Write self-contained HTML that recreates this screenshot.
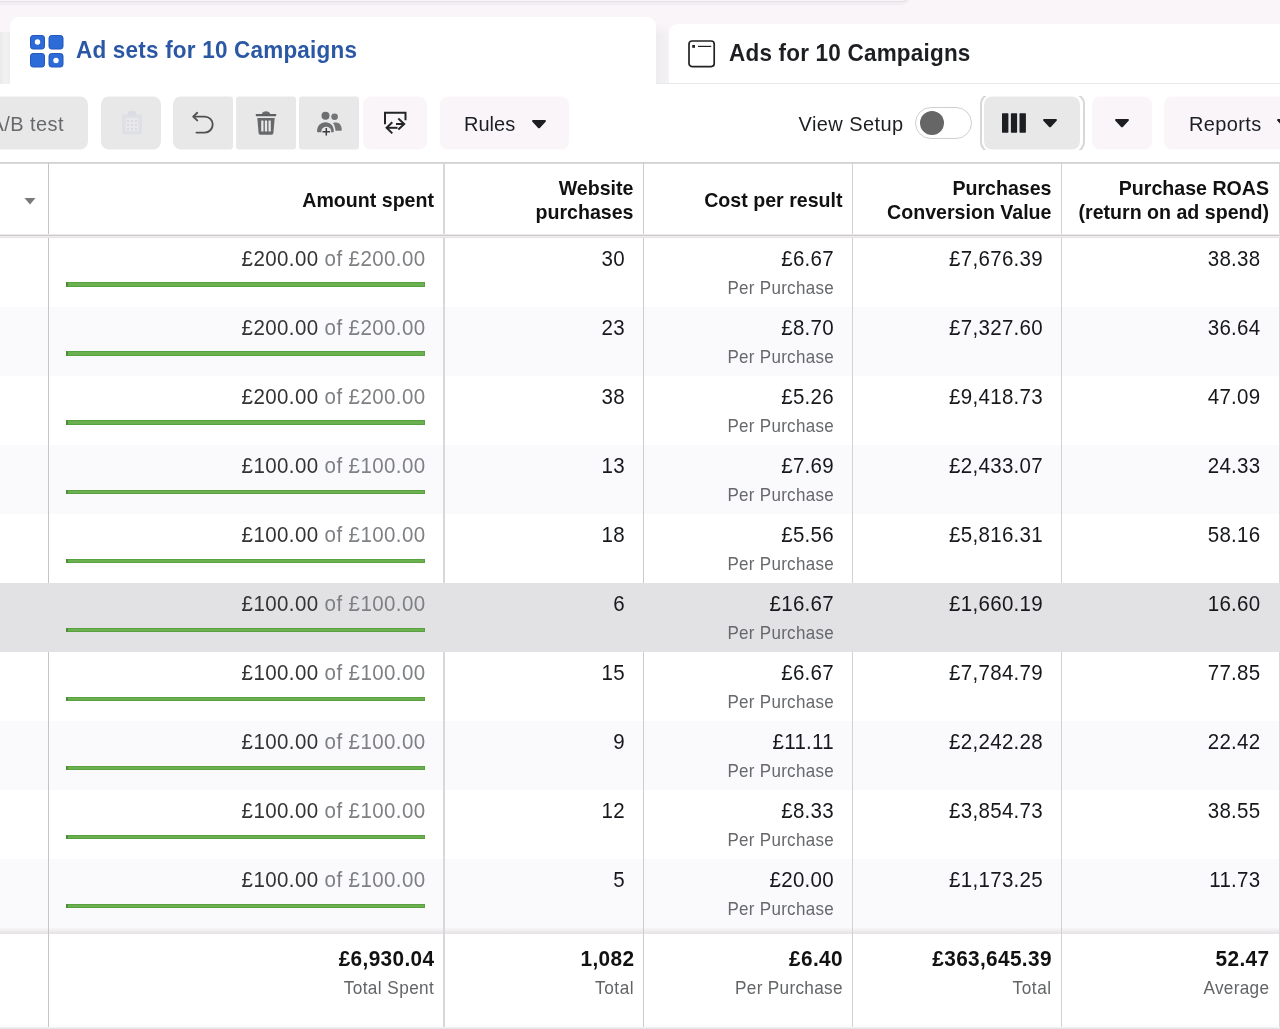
<!DOCTYPE html>
<html lang="en">
<head>
<meta charset="utf-8">
<title>Ad sets for 10 Campaigns</title>
<style>
*{box-sizing:border-box;margin:0;padding:0}
html,body{width:1280px;height:1029px;overflow:hidden;background:#fff}
body{font-family:"Liberation Sans",sans-serif;color:#1c1e21;position:relative}
.abs{position:absolute}
/* top strip */
#topbg{left:0;top:0;width:1280px;height:84px;background:#f9f5f9}
#topline{left:-10px;top:-8.5px;width:921px;height:10px;background:#f9f5f9;border-bottom:1.5px solid #e3e1e5;border-right:1.5px solid #e3e1e5;border-radius:0 0 12px 0;box-shadow:0 3px 0 #f1eef2}
#tabline{left:0;top:82px;width:1280px;height:2px;background:#e9e8ea}
#sliverL{left:0;top:32px;width:9.5px;height:51.5px;background:linear-gradient(90deg,#eaeaea,#f2f2f2 55%,#ededed)}
#tab1{left:10px;top:17px;width:646px;height:67px;background:#fff;border-radius:9px 9px 0 0}
#gap{left:656px;top:22px;width:13px;height:61px;background:linear-gradient(180deg,#f9f5f9 0,rgba(249,245,249,0) 14px),linear-gradient(90deg,#eeecee,#f5f2f5)}
#tab2{left:668.5px;top:23.5px;width:630px;height:59px;background:#fff;border-radius:9px 0 0 0}
.tabt{font-weight:700;font-size:22.5px;white-space:nowrap;line-height:26px;transform:scaleY(1.06);transform-origin:0 20.8px}
#t1{left:76px;top:38.3px;color:#2b58a5;letter-spacing:0.2px}
#t2{left:729px;top:41px;color:#1c1e21;letter-spacing:0.2px}
/* toolbar */
.btn{position:absolute;top:96px;height:53px;transform:translateY(0.5px);background:#e9e8e9;border-radius:8px}
.btn.lt{background:#f9f5f9}
.tt{position:absolute;font-size:20px;line-height:24px;white-space:nowrap;color:#1c1e21;transform:scaleY(1.04);transform-origin:0 18.9px}
/* table */
.hline{position:absolute;left:0;width:1280px}
.vline{position:absolute;top:163px;width:1px;height:866px;background:#d3d2d4}
.hd{position:absolute;font-weight:700;font-size:19.6px;line-height:24px;text-align:right;white-space:nowrap;color:#111;transform:scaleY(1.06);transform-origin:100% 18.8px}
.row{position:absolute;left:0;width:1280px;height:69.05px}
.row.alt{background:#fafafd}
.row.hl{background:#e2e2e4;z-index:3}
.c{position:absolute;top:0;height:100%;text-align:right}
.c1{left:49px;width:376px}
.c2{left:444px;width:180.5px}
.c3{left:644px;width:189.5px}
.c4{left:853px;width:189.5px}
.c5{left:1062px;width:198px}
.v{position:absolute;right:-0.5px;top:9.2px;font-size:20.5px;line-height:24px;white-space:nowrap;color:#17181b;letter-spacing:0.3px;transform:scaleY(1.08);transform-origin:100% 19.1px}
.c1 .v{letter-spacing:0.4px}
.g{color:#7e8083}
.a{color:#333}
.s{position:absolute;right:-0.5px;top:41px;font-size:17px;line-height:20px;color:#66686b;white-space:nowrap;letter-spacing:0.3px;transform:scaleY(1.07);transform-origin:100% 15.9px}
.bar{position:absolute;left:17px;right:0;top:44.8px;height:4.5px;background:#6bb150;border:1px solid #58a040;border-left:2px solid #4a8a3a}
.ft{position:absolute;text-align:right;white-space:nowrap}
.fv{font-weight:700;font-size:20.8px;line-height:24px;color:#111;letter-spacing:0.35px;margin-right:-0.35px;transform:scaleY(1.06);transform-origin:100% 19.2px}
.fs{font-size:17.2px;line-height:20px;color:#626466;letter-spacing:0.3px;margin-right:-0.3px;transform:scaleY(1.06);transform-origin:100% 16px}
</style>
</head>
<body>
<div id="root" style="position:absolute;left:0;top:0;width:1280px;height:1029px;will-change:transform;overflow:hidden">
<div id="topbg" class="abs"></div>
<div id="topline" class="abs"></div>
<div id="tabline" class="abs"></div>
<div id="sliverL" class="abs"></div>
<div id="tab1" class="abs"></div>
<div id="gap" class="abs"></div>
<div id="tab2" class="abs"></div>
<svg class="abs" style="left:30px;top:35px" width="34" height="33" viewBox="0 0 34 33">
  <g fill="#2d6bd8" stroke="#2558b8" stroke-width="1">
    <rect x="0.5" y="0.5" width="14" height="13.5" rx="2.5"/>
    <rect x="19" y="0.5" width="14" height="13.5" rx="2.5"/>
    <rect x="0.5" y="18.5" width="14" height="13.5" rx="2.5"/>
    <rect x="19" y="18.5" width="14" height="13.5" rx="2.5"/>
  </g>
  <circle cx="7.5" cy="7" r="2.7" fill="#fff"/>
  <circle cx="26" cy="25.5" r="2.7" fill="#fff"/>
</svg>
<div id="t1" class="abs tabt m">Ad sets for 10 Campaigns</div>
<svg class="abs" style="left:687px;top:39px" width="30" height="30" viewBox="0 0 30 30">
  <rect x="2" y="2" width="25.2" height="25.6" rx="3" fill="none" stroke="#222" stroke-width="1.7"/>
  <rect x="5.2" y="6" width="2.8" height="2.8" fill="#222"/>
  <rect x="11" y="6.8" width="13.2" height="1.2" fill="#222"/>
</svg>
<div id="t2" class="abs tabt m">Ads for 10 Campaigns</div>

<!-- toolbar -->
<div class="btn" style="left:-20px;width:108px"></div>
<div class="tt m" style="left:-9.5px;top:112px;color:#66686b;letter-spacing:0.42px">A/B test</div>
<div class="btn" style="left:101px;width:60px"></div>
<div class="btn" style="left:173px;width:60px;border-radius:8px 3px 3px 8px"></div>
<div class="btn" style="left:236px;width:60px;border-radius:3px"></div>
<div class="btn" style="left:299px;width:60px;border-radius:3px"></div>
<div class="btn lt" style="left:363px;width:64px"></div>
<div class="btn lt" style="left:440px;width:129px"></div>
<div class="tt m" style="left:464px;top:112px">Rules</div>
<svg class="abs" style="left:532.3px;top:119.5px" width="14" height="9" viewBox="0 0 14 9"><path d="M1.2 0 H12.8 C13.8 0 14.3 1.1 13.6 1.8 L8.1 7.8 C7.5 8.5 6.5 8.5 5.9 7.8 L0.4 1.8 C-0.3 1.1 0.2 0 1.2 0 Z" fill="#1c1e21"/></svg>
<div class="tt m" style="left:798.5px;top:112px;letter-spacing:0.42px">View Setup</div>
<div class="abs" style="left:915px;top:107px;width:57px;height:32px;border-radius:16px;border:1.5px solid #cfcfd1;background:#fff"></div>
<div class="abs" style="left:919.5px;top:111px;width:24px;height:24px;border-radius:12px;background:#666"></div>
<div class="abs" style="left:978px;top:96px;width:110px;height:54px;overflow:hidden"><div class="abs" style="left:2.2px;top:-3px;width:104.6px;height:60px;border-radius:11px;border:2.5px solid #d9d8d9;background:#fff"></div></div>
<div class="btn" style="left:983.7px;width:96.5px"></div>
<svg class="abs" style="left:1002px;top:113px" width="24" height="20" viewBox="0 0 24 20"><g fill="#1c1e21"><rect x="0" y="0.2" width="6.4" height="19.5" rx="0.6"/><rect x="8.9" y="0.2" width="6.2" height="19.5" rx="0.6"/><rect x="17.5" y="0.2" width="6.4" height="19.5" rx="0.6"/></g></svg>
<svg class="abs" style="left:1043.3px;top:119.4px" width="14" height="9" viewBox="0 0 14 9"><path d="M1.2 0 H12.8 C13.8 0 14.3 1.1 13.6 1.8 L8.1 7.8 C7.5 8.5 6.5 8.5 5.9 7.8 L0.4 1.8 C-0.3 1.1 0.2 0 1.2 0 Z" fill="#1c1e21"/></svg>
<div class="btn lt" style="left:1092px;width:60px"></div>
<svg class="abs" style="left:1115.2px;top:119.4px" width="14" height="9" viewBox="0 0 14 9"><path d="M1.2 0 H12.8 C13.8 0 14.3 1.1 13.6 1.8 L8.1 7.8 C7.5 8.5 6.5 8.5 5.9 7.8 L0.4 1.8 C-0.3 1.1 0.2 0 1.2 0 Z" fill="#1c1e21"/></svg>
<div class="btn lt" style="left:1164px;width:140px"></div>
<div class="tt m" style="left:1189px;top:112px;letter-spacing:0.36px">Reports</div>
<svg class="abs" style="left:1277px;top:119.4px" width="14" height="9" viewBox="0 0 14 9"><path d="M1.2 0 H12.8 C13.8 0 14.3 1.1 13.6 1.8 L8.1 7.8 C7.5 8.5 6.5 8.5 5.9 7.8 L0.4 1.8 C-0.3 1.1 0.2 0 1.2 0 Z" fill="#1c1e21"/></svg>


<!-- clipboard (disabled) -->
<svg class="abs" style="left:120px;top:110px" width="24" height="26" viewBox="0 0 24 26">
  <rect x="2" y="4" width="20" height="20.5" rx="2" fill="#dfdfe6"/>
  <rect x="8" y="1" width="8" height="5" rx="1.5" fill="#dcdce4"/>
  <rect x="5.5" y="8" width="13" height="13" fill="#e9e8ec"/>
  <g fill="#dadae2"><rect x="7" y="10" width="2" height="2"/><rect x="11" y="10" width="2" height="2"/><rect x="15" y="10" width="2" height="2"/><rect x="7" y="14" width="2" height="2"/><rect x="11" y="14" width="2" height="2"/><rect x="15" y="14" width="2" height="2"/><rect x="7" y="18" width="2" height="2"/><rect x="11" y="18" width="2" height="2"/><rect x="15" y="18" width="2" height="2"/></g>
</svg>
<!-- undo -->
<svg class="abs" style="left:188px;top:108px" width="30" height="30" viewBox="188 108 30 30">
  <g fill="none" stroke="#505153" stroke-width="1.9" stroke-linecap="round" stroke-linejoin="round">
    <path d="M196.5 132.6 H204.7 A8 8 0 0 0 204.7 116.6 H194"/>
    <path d="M197.2 112.8 L193.2 116.6 L197.2 120.4"/>
  </g>
</svg>
<!-- trash -->
<svg class="abs" style="left:254px;top:109px" width="24" height="28" viewBox="254 109 24 28">
  <path d="M261.8 114 C262.3 110.3 269.7 110.3 270.2 114 Z" fill="#6a6b6d"/>
  <rect x="255.8" y="114" width="20.4" height="2.2" rx="0.6" fill="#5f6062"/>
  <path d="M257.3 118 H274.7 L273.4 133 C273.3 134 272.6 134.7 271.6 134.7 H260.4 C259.4 134.7 258.7 134 258.6 133 Z" fill="#67686a"/>
  <rect x="261.2" y="120.5" width="2.3" height="11" rx="0.5" fill="#e9e8e9"/>
  <rect x="264.85" y="120.5" width="2.3" height="11" rx="0.5" fill="#e9e8e9"/>
  <rect x="268.5" y="120.5" width="2.3" height="11" rx="0.5" fill="#e9e8e9"/>
</svg>
<!-- people -->
<svg class="abs" style="left:314px;top:109px" width="32" height="30" viewBox="314 109 32 30">
  <circle cx="325.5" cy="115.8" r="4" fill="#6d6e70"/>
  <circle cx="334.6" cy="116.8" r="3.3" fill="#747577"/>
  <path d="M317 131.5 C317 126 320.5 122.3 325.5 122.3 C330.5 122.3 333.8 126 333.8 131.5 C333.8 132 333.5 132.3 333 132.3 H317.8 C317.3 132.3 317 132 317 131.5 Z" fill="#6d6e70"/>
  <path d="M333 123 C334 122.6 335 122.5 336 122.5 C339.5 122.5 341.8 125.5 341.8 130 C341.8 130.5 341.5 130.8 341 130.8 H335.5 C335.3 127.5 334.5 125 333 123 Z" fill="#747577"/>
  <circle cx="326.3" cy="131.7" r="5" fill="#e9e8e9"/>
  <path d="M326.3 128 V135.5 M322.5 131.7 H330.1" stroke="#3c3d3f" stroke-width="1.5" fill="none"/>
</svg>
<!-- swap -->
<svg class="abs" style="left:380px;top:108px" width="32" height="30" viewBox="380 108 32 30">
  <g fill="none" stroke="#242527" stroke-width="2">
    <path d="M385 124.3 V112.8 H405.5 V120.3"/>
    <path d="M396 124 H404"/>
    <path d="M398.3 118.4 L404.2 124 L398.3 129.6"/>
    <path d="M387.5 127.8 H397.5"/>
    <path d="M392.3 122.2 L386.6 127.8 L392.3 133.4"/>
  </g>
</svg>

<!-- table -->
<div class="hline" style="top:162px;height:2px;background:linear-gradient(#d3d1d3 0 1px,#dbd9db 1px 2px)"></div>
<div class="row" style="top:237.6px">
  <div class="c c1"><div class="v"><span class="a">£200.00</span> <span class="g">of £200.00</span></div><div class="bar"></div></div>
  <div class="c c2"><div class="v">30</div></div>
  <div class="c c3"><div class="v">£6.67</div><div class="s">Per Purchase</div></div>
  <div class="c c4"><div class="v">£7,676.39</div></div>
  <div class="c c5"><div class="v">38.38</div></div>
</div>
<div class="row alt" style="top:306.6px">
  <div class="c c1"><div class="v"><span class="a">£200.00</span> <span class="g">of £200.00</span></div><div class="bar"></div></div>
  <div class="c c2"><div class="v">23</div></div>
  <div class="c c3"><div class="v">£8.70</div><div class="s">Per Purchase</div></div>
  <div class="c c4"><div class="v">£7,327.60</div></div>
  <div class="c c5"><div class="v">36.64</div></div>
</div>
<div class="row" style="top:375.7px">
  <div class="c c1"><div class="v"><span class="a">£200.00</span> <span class="g">of £200.00</span></div><div class="bar"></div></div>
  <div class="c c2"><div class="v">38</div></div>
  <div class="c c3"><div class="v">£5.26</div><div class="s">Per Purchase</div></div>
  <div class="c c4"><div class="v">£9,418.73</div></div>
  <div class="c c5"><div class="v">47.09</div></div>
</div>
<div class="row alt" style="top:444.8px">
  <div class="c c1"><div class="v"><span class="a">£100.00</span> <span class="g">of £100.00</span></div><div class="bar"></div></div>
  <div class="c c2"><div class="v">13</div></div>
  <div class="c c3"><div class="v">£7.69</div><div class="s">Per Purchase</div></div>
  <div class="c c4"><div class="v">£2,433.07</div></div>
  <div class="c c5"><div class="v">24.33</div></div>
</div>
<div class="row" style="top:513.8px">
  <div class="c c1"><div class="v"><span class="a">£100.00</span> <span class="g">of £100.00</span></div><div class="bar"></div></div>
  <div class="c c2"><div class="v">18</div></div>
  <div class="c c3"><div class="v">£5.56</div><div class="s">Per Purchase</div></div>
  <div class="c c4"><div class="v">£5,816.31</div></div>
  <div class="c c5"><div class="v">58.16</div></div>
</div>
<div class="row alt hl" style="top:582.9px">
  <div class="c c1"><div class="v"><span class="a">£100.00</span> <span class="g">of £100.00</span></div><div class="bar"></div></div>
  <div class="c c2"><div class="v">6</div></div>
  <div class="c c3"><div class="v">£16.67</div><div class="s">Per Purchase</div></div>
  <div class="c c4"><div class="v">£1,660.19</div></div>
  <div class="c c5"><div class="v">16.60</div></div>
</div>
<div class="row" style="top:651.9px">
  <div class="c c1"><div class="v"><span class="a">£100.00</span> <span class="g">of £100.00</span></div><div class="bar"></div></div>
  <div class="c c2"><div class="v">15</div></div>
  <div class="c c3"><div class="v">£6.67</div><div class="s">Per Purchase</div></div>
  <div class="c c4"><div class="v">£7,784.79</div></div>
  <div class="c c5"><div class="v">77.85</div></div>
</div>
<div class="row alt" style="top:720.9px">
  <div class="c c1"><div class="v"><span class="a">£100.00</span> <span class="g">of £100.00</span></div><div class="bar"></div></div>
  <div class="c c2"><div class="v">9</div></div>
  <div class="c c3"><div class="v">£11.11</div><div class="s">Per Purchase</div></div>
  <div class="c c4"><div class="v">£2,242.28</div></div>
  <div class="c c5"><div class="v">22.42</div></div>
</div>
<div class="row" style="top:790.0px">
  <div class="c c1"><div class="v"><span class="a">£100.00</span> <span class="g">of £100.00</span></div><div class="bar"></div></div>
  <div class="c c2"><div class="v">12</div></div>
  <div class="c c3"><div class="v">£8.33</div><div class="s">Per Purchase</div></div>
  <div class="c c4"><div class="v">£3,854.73</div></div>
  <div class="c c5"><div class="v">38.55</div></div>
</div>
<div class="row alt" style="top:859.0px">
  <div class="c c1"><div class="v"><span class="a">£100.00</span> <span class="g">of £100.00</span></div><div class="bar"></div></div>
  <div class="c c2"><div class="v">5</div></div>
  <div class="c c3"><div class="v">£20.00</div><div class="s">Per Purchase</div></div>
  <div class="c c4"><div class="v">£1,173.25</div></div>
  <div class="c c5"><div class="v">11.73</div></div>
</div>
<div class="hline" style="top:928px;height:6px;background:linear-gradient(#f8f6f8,#e5e2e3)"></div>
<div class="vline" style="left:48px;background:#c6c4c6"></div>
<div class="vline" style="left:443px;width:2px;background:#d9d7d9"></div>
<div class="vline" style="left:643px;background:#cdcbcd"></div>
<div class="vline" style="left:852px;background:#d2d0d2"></div>
<div class="vline" style="left:1061px;background:#d2d0d2"></div>
<div class="vline" style="left:1279px;background:#d8d6d8"></div>
<div class="hline" style="top:234px;height:4px;background:linear-gradient(#eceaec 0 1px,#cbc8ca 1px 2px,#f1eff0 2px 3px,#e5e2e4 3px 4px)"></div>
<svg class="abs" style="left:24px;top:198px" width="12" height="7" viewBox="0 0 12 7"><path d="M0.5 0 H11.5 L6 6.5 Z" fill="#77797c"/></svg>
<div class="hd m" style="right:846px;top:188px">Amount spent</div>
<div class="hd m" style="right:646.5px;top:176px">Website</div>
<div class="hd m" style="right:646.5px;top:200px">purchases</div>
<div class="hd m" style="right:437.5px;top:188px">Cost per result</div>
<div class="hd m" style="right:228.5px;top:176px">Purchases</div>
<div class="hd m" style="right:228.5px;top:200px">Conversion Value</div>
<div class="hd m" style="right:11px;top:176px">Purchase ROAS</div>
<div class="hd m" style="right:11px;top:200px">(return on ad spend)</div>

<!-- footer -->
<div class="hline" style="top:1027px;height:2px;background:linear-gradient(#f0f0f0 0 1px,#e6e6e6 1px 2px)"></div>
<div class="ft fv m" style="right:846px;top:947px">£6,930.04</div>
<div class="ft fs m" style="right:846px;top:978px;letter-spacing:0.42px">Total Spent</div>
<div class="ft fv m" style="right:646px;top:947px">1,082</div>
<div class="ft fs m" style="right:646px;top:978px;letter-spacing:0.6px">Total</div>
<div class="ft fv m" style="right:437.5px;top:947px">£6.40</div>
<div class="ft fs m" style="right:437.5px;top:978px">Per Purchase</div>
<div class="ft fv m" style="right:228.5px;top:947px">£363,645.39</div>
<div class="ft fs m" style="right:228.5px;top:978px;letter-spacing:0.6px">Total</div>
<div class="ft fv m" style="right:11px;top:947px">52.47</div>
<div class="ft fs m" style="right:11px;top:978px">Average</div>
</div>
</body>
</html>
